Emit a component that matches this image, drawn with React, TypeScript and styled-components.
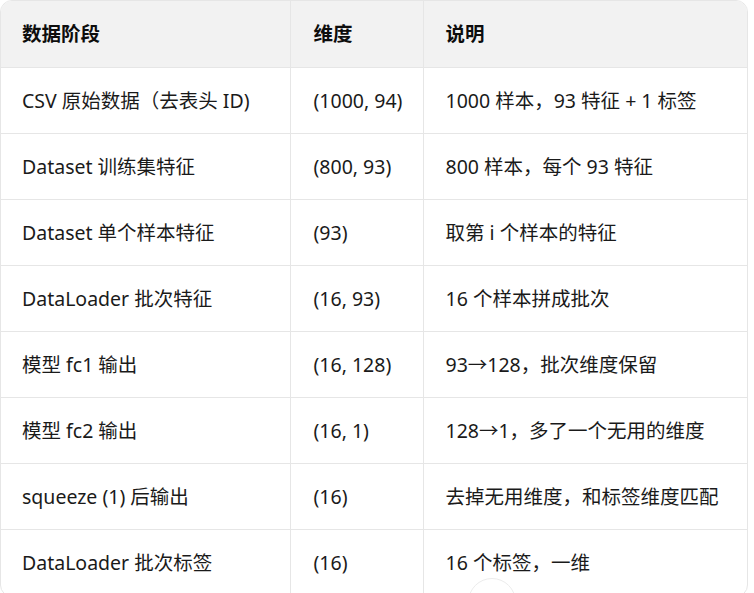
import styled, { createGlobalStyle } from "styled-components";

const GlobalStyle = createGlobalStyle`
  html, body {
    margin: 0;
    padding: 0;
    background: #ffffff;
  }
  body {
    font-family: "Noto Sans", "Noto Sans CJK SC", sans-serif;
    color: #1a1a1a;
    overflow: hidden;
  }
`

const rows = [
  ["CSV 原始数据（去表头 ID)", "(1000, 94)", "1000 样本，93 特征 + 1 标签"],
  ["Dataset 训练集特征", "(800, 93)", "800 样本，每个 93 特征"],
  ["Dataset 单个样本特征", "(93)", "取第 i 个样本的特征"],
  ["DataLoader 批次特征", "(16, 93)", "16 个样本拼成批次"],
  ["模型 fc1 输出", "(16, 128)", "93→128，批次维度保留"],
  ["模型 fc2 输出", "(16, 1)", "128→1，多了一个无用的维度"],
  ["squeeze (1) 后输出", "(16)", "去掉无用维度，和标签维度匹配"],
  ["DataLoader 批次标签", "(16)", "16 个标签，一维"],
]

const App = () => {
  return (
    <Page>
      <GlobalStyle />
      <TableWrap>
        <Table>
          <colgroup>
            <col style={{ width: 289 }} />
            <col style={{ width: 133 }} />
            <col />
          </colgroup>
          <thead>
            <tr>
              <Th>数据阶段</Th>
              <Th>维度</Th>
              <Th>说明</Th>
            </tr>
          </thead>
          <tbody>
            {rows.map((r, i) => (
              <tr key={i}>
                <Td>{r[0]}</Td>
                <Td>{r[1]}</Td>
                <Td>{r[2]}</Td>
              </tr>
            ))}
          </tbody>
        </Table>
      </TableWrap>
      <ScrollButton />
    </Page>
  );
}

const Page = styled.div`
  position: relative;
  width: 754px;
  height: 593px;
  overflow: hidden;
`
const TableWrap = styled.div`
  width: 748px;
  border: 1px solid #e6e6e6;
  border-radius: 12px;
  overflow: hidden;
  box-sizing: border-box;
`
const Table = styled.table`
  width: 100%;
  border-collapse: collapse;
  table-layout: fixed;
`
const Th = styled.th`
  background: #f2f2f2;
  text-align: left;
  font-weight: 700;
  font-size: 19.5px;
  line-height: 24px;
  padding: 21px 20px 21px 23px;
  height: 66px;
  box-sizing: border-box;
  border-left: 1px solid #e6e6e6;
  border-bottom: 1px solid #e6e6e6;
  color: #0d0d0d;
  &:first-child { border-left: none; padding-left: 21px; }
  &:last-child { padding-left: 22px; }
`
const Td = styled.td`
  font-size: 19.5px;
  line-height: 24px;
  padding: 21px 20px 20px 23px;
  border-left: 1px solid #e6e6e6;
  border-bottom: 1px solid #e6e6e6;
  white-space: nowrap;
  &:first-child { border-left: none; padding-left: 21px; }
  &:last-child { padding-left: 22px; }
`
const ScrollButton = styled.div`
  position: absolute;
  left: 468px;
  top: 578px;
  width: 48px;
  height: 48px;
  border-radius: 50%;
  border: 1px solid #ececec;
  background: #ffffff;
  box-sizing: border-box;
`

export default App;
